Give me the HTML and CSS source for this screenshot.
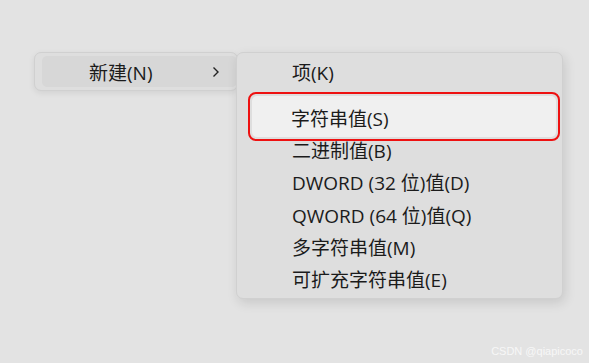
FILE: index.html
```html
<!DOCTYPE html>
<html lang="zh-CN">
<head>
    <meta charset="UTF-8">
    <title>新建</title>
    <link rel="stylesheet" href="styles.css">
</head>
<body>
    <div class="desk">
        <div class="menu menu-main">
            <div class="item item-open">
                <span class="label">新建(N)</span>
                <svg class="chevron" width="8" height="12" viewBox="0 0 8 12"><path d="M1.5 1.5 L6 6 L1.5 10.5" fill="none" stroke="#222" stroke-width="1.4"/></svg>
            </div>
        </div>
        <div class="menu menu-sub">
            <div class="row first">项(K)</div>
            <div class="mark">
                <div class="row hot">字符串值(S)</div>
            </div>
            <div class="row">二进制值(B)</div>
            <div class="row">DWORD (32 位)值(D)</div>
            <div class="row">QWORD (64 位)值(Q)</div>
            <div class="row">多字符串值(M)</div>
            <div class="row">可扩充字符串值(E)</div>
        </div>
    </div>
    <div class="footer">CSDN @qiapicoco</div>
</body>
</html>
```

FILE: styles.css
```css
body {
    margin: 0;
    width: 589px;
    height: 363px;
    background-color: #e3e3e3;
    font-family: "Open Sans", "Noto Sans CJK SC", sans-serif;
    color: #1b1b1b;
    overflow: hidden;
    position: relative;
}
.desk {
    display: flex;
    align-items: flex-start;
    padding: 52px 0 0 34px;
}
.menu {
    background-color: #dedede;
    border: 1px solid #d0d0d0;
    border-radius: 7px;
    box-sizing: border-box;
}
.menu-main {
    width: 204px;
    height: 39px;
    padding: 3px 0 3px 7px;
    box-shadow: 0 2px 6px rgba(0, 0, 0, 0.08);
}
.item {
    display: flex;
    align-items: center;
    height: 31px;
    background-color: #d7d7d7;
    border-radius: 5px;
    font-size: 19px;
}
.item .label {
    margin-left: 47px;
    flex-grow: 1;
}
.item .chevron {
    margin-right: 17px;
}
.menu-sub {
    width: 327px;
    height: 247px;
    margin-left: -2px;
    padding-top: 3px;
    position: relative; /* encima del menu principal */
    box-shadow: 2px 4px 12px rgba(0, 0, 0, 0.12);
}
.row {
    height: 32.3px;
    line-height: 32.3px;
    padding-left: 55px;
    font-size: 19px;
}
.row.first {
    height: 36px;
    line-height: 34px;
}
/* recuadro rojo de anotacion */
.mark {
    margin: 0 2px -6px 11px;
    border: 2px solid #ee1111;
    border-radius: 8px;
    padding: 2px;
}
.row.hot {
    height: 41px;
    line-height: 46px;
    padding-left: 39px;
    background-color: #f0f0f0;
    border-radius: 5px;
}
.footer {
    position: absolute;
    right: 6px;
    bottom: 6px;
    font-family: "Liberation Sans", Arial, sans-serif;
    font-size: 11px;
    color: #f7f7f7;
}
```
